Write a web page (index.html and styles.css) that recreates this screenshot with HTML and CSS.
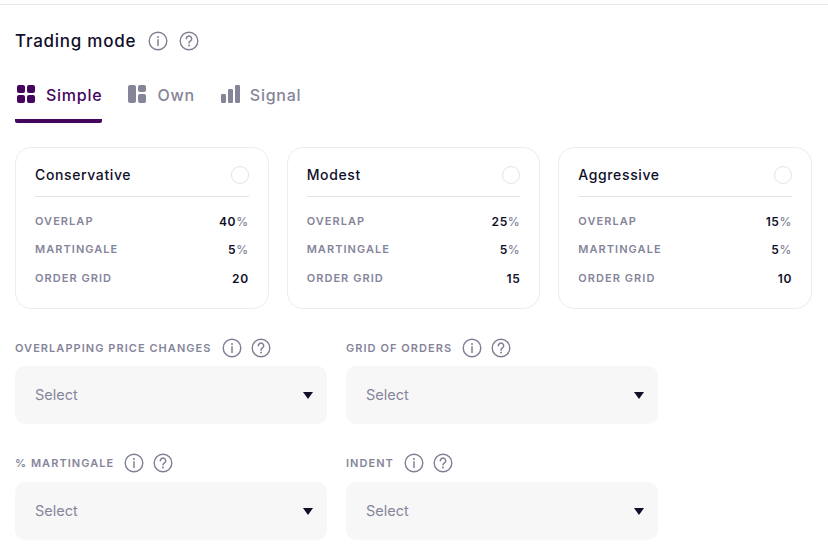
FILE: index.html
```html
<!DOCTYPE html>
<html lang="en">
<head>
<meta charset="utf-8">
<title>Trading mode</title>
<link rel="stylesheet" href="styles.css">
</head>
<body>
<svg class="defs" width="0" height="0" aria-hidden="true">
  <symbol id="info" viewBox="0 0 20 20"><circle cx="10" cy="10" r="8.8" fill="none" stroke="currentColor" stroke-width="1.4"/><path d="M10 8.8v5.6" fill="none" stroke="currentColor" stroke-width="1.5" stroke-linecap="round"/><circle cx="10" cy="6" r="1" fill="currentColor"/></symbol>
  <symbol id="help" viewBox="0 0 20 20"><circle cx="10" cy="10" r="8.8" fill="none" stroke="currentColor" stroke-width="1.4"/><path d="M7.3 7.7a2.7 2.6 0 1 1 4.2 2.2c-.9.6-1.5 1.1-1.5 2.2" fill="none" stroke="currentColor" stroke-width="1.5" stroke-linecap="round"/><circle cx="10" cy="14.6" r="1" fill="currentColor"/></symbol>
</svg>
<main class="page">
  <header class="title-row">
    <h1 class="title">Trading mode</h1>
    <div class="hints hints-wide">
      <svg class="hint"><use href="#info"/></svg>
      <svg class="hint"><use href="#help"/></svg>
    </div>
  </header>
  <nav class="tabs">
    <div class="tab tab-active">
      <svg class="tab-icon" viewBox="0 0 22 22"><rect x="2" y="2" width="8" height="8" rx="2"/><rect x="12" y="2" width="8" height="8" rx="2"/><rect x="2" y="12" width="8" height="8" rx="2"/><rect x="12" y="12" width="8" height="8" rx="2"/></svg>
      <span>Simple</span>
    </div>
    <div class="tab">
      <svg class="tab-icon" viewBox="0 0 22 22"><rect x="2" y="2" width="8" height="18" rx="2"/><rect x="12" y="2" width="8" height="7" rx="2"/><rect x="12" y="11" width="8" height="9" rx="2"/></svg>
      <span>Own</span>
    </div>
    <div class="tab">
      <svg class="tab-icon" viewBox="0 0 22 22"><rect x="2" y="11" width="5" height="9" rx="1.2"/><rect x="9" y="6" width="5" height="14" rx="1.2"/><rect x="16" y="2" width="5" height="18" rx="1.2"/></svg>
      <span>Signal</span>
    </div>
  </nav>
  <section class="cards">
    <article class="card">
      <div class="card-head"><h2 class="card-title">Conservative</h2><span class="radio"></span></div>
      <dl class="stats">
        <div class="stat"><dt>OVERLAP</dt><dd>40<span class="pct">%</span></dd></div>
        <div class="stat"><dt>MARTINGALE</dt><dd>5<span class="pct">%</span></dd></div>
        <div class="stat"><dt>ORDER GRID</dt><dd>20</dd></div>
      </dl>
    </article>
    <article class="card">
      <div class="card-head"><h2 class="card-title">Modest</h2><span class="radio"></span></div>
      <dl class="stats">
        <div class="stat"><dt>OVERLAP</dt><dd>25<span class="pct">%</span></dd></div>
        <div class="stat"><dt>MARTINGALE</dt><dd>5<span class="pct">%</span></dd></div>
        <div class="stat"><dt>ORDER GRID</dt><dd>15</dd></div>
      </dl>
    </article>
    <article class="card">
      <div class="card-head"><h2 class="card-title">Aggressive</h2><span class="radio"></span></div>
      <dl class="stats">
        <div class="stat"><dt>OVERLAP</dt><dd>15<span class="pct">%</span></dd></div>
        <div class="stat"><dt>MARTINGALE</dt><dd>5<span class="pct">%</span></dd></div>
        <div class="stat"><dt>ORDER GRID</dt><dd>10</dd></div>
      </dl>
    </article>
  </section>
  <section class="fields">
    <div class="field">
      <div class="field-label"><span>OVERLAPPING PRICE CHANGES</span><div class="hints"><svg class="hint"><use href="#info"/></svg><svg class="hint"><use href="#help"/></svg></div></div>
      <div class="select"><span>Select</span><i class="caret"></i></div>
    </div>
    <div class="field">
      <div class="field-label"><span>GRID OF ORDERS</span><div class="hints"><svg class="hint"><use href="#info"/></svg><svg class="hint"><use href="#help"/></svg></div></div>
      <div class="select"><span>Select</span><i class="caret"></i></div>
    </div>
    <div class="field">
      <div class="field-label"><span>% MARTINGALE</span><div class="hints"><svg class="hint"><use href="#info"/></svg><svg class="hint"><use href="#help"/></svg></div></div>
      <div class="select"><span>Select</span><i class="caret"></i></div>
    </div>
    <div class="field">
      <div class="field-label"><span>INDENT</span><div class="hints"><svg class="hint"><use href="#info"/></svg><svg class="hint"><use href="#help"/></svg></div></div>
      <div class="select"><span>Select</span><i class="caret"></i></div>
    </div>
  </section>
</main>
</body>
</html>
```
FILE: styles.css
```css
* { box-sizing: border-box; }
html, body { margin: 0; padding: 0; background: #fff; }
body { font-family: Inter, "Liberation Sans", sans-serif; color: #0f0f2a; overflow: hidden; }
.defs { position: absolute; }
.page { margin-top: 4px; border-top: 1px solid #e6e6e6; padding: 24px 16px 0 15px; width: 828px; }
.title-row { display: flex; align-items: center; gap: 12px; height: 24px; }
.title { margin: 0; font-size: 17px; font-weight: 500; letter-spacing: .75px; }
.hints { display: flex; align-items: center; gap: 9px; color: #7f7f93; }
.hints-wide { gap: 11px; }
.hint { width: 20px; height: 20px; display: block; }
.tabs { display: flex; gap: 24px; margin-top: 21px; height: 49px; }
.tab { display: flex; align-items: flex-start; gap: 9px; height: 49px; padding-top: 9px; color: #85859a; font-size: 16px; font-weight: 500; letter-spacing: .75px; line-height: 24px; }
.tab-active { color: #45055f; border-bottom: 4px solid #45055f; border-radius: 0 0 2px 2px; }
.tab-icon { width: 22px; height: 22px; fill: currentColor; display: block; }
.cards { display: grid; grid-template-columns: repeat(3, 1fr); gap: 18px; width: 797px; margin-top: 24px; }
.card { border: 1px solid #ececec; border-radius: 16px; height: 162px; padding: 17px 19px 0; }
.card-head { display: flex; justify-content: space-between; align-items: center; box-sizing: content-box; height: 20px; padding-bottom: 11px; border-bottom: 1px solid #e3e3e3; }
.card-title { margin: 0 0 2px; font-size: 14px; font-weight: 500; letter-spacing: .62px; }
.radio { width: 18px; height: 18px; border: 1px solid #e3e3e3; border-radius: 50%; }
.stats { margin: 15px 0 0; display: flex; flex-direction: column; gap: 10px; }
.stat { display: flex; justify-content: space-between; align-items: center; height: 18px; }
.stat:last-child { margin-top: 1px; }
.stat dt { font-size: 11px; font-weight: 600; letter-spacing: 1.05px; color: #85859a; }
.stat dd { margin: 0; font-size: 12px; font-weight: 600; letter-spacing: .6px; }
.pct { color: #85859a; font-weight: 500; }
.fields { display: grid; grid-template-columns: 312px 312px; column-gap: 19px; row-gap: 29px; margin-top: 29px; }
.field-label { display: flex; align-items: center; gap: 10px; height: 20px; font-size: 11px; font-weight: 600; letter-spacing: 1.05px; color: #85859a; }
.select { display: flex; justify-content: space-between; align-items: center; height: 58px; margin-top: 8px; padding: 0 14px 2px 20px; background: #f7f7f7; border-radius: 10px; font-size: 14.5px; color: #85859a; }
.field:nth-child(n+3) .select { margin-top: 9px; }
.caret { width: 0; height: 0; border-left: 5.5px solid transparent; border-right: 5.5px solid transparent; border-top: 7px solid #0f0f2a; margin-top: 2px; }
```
